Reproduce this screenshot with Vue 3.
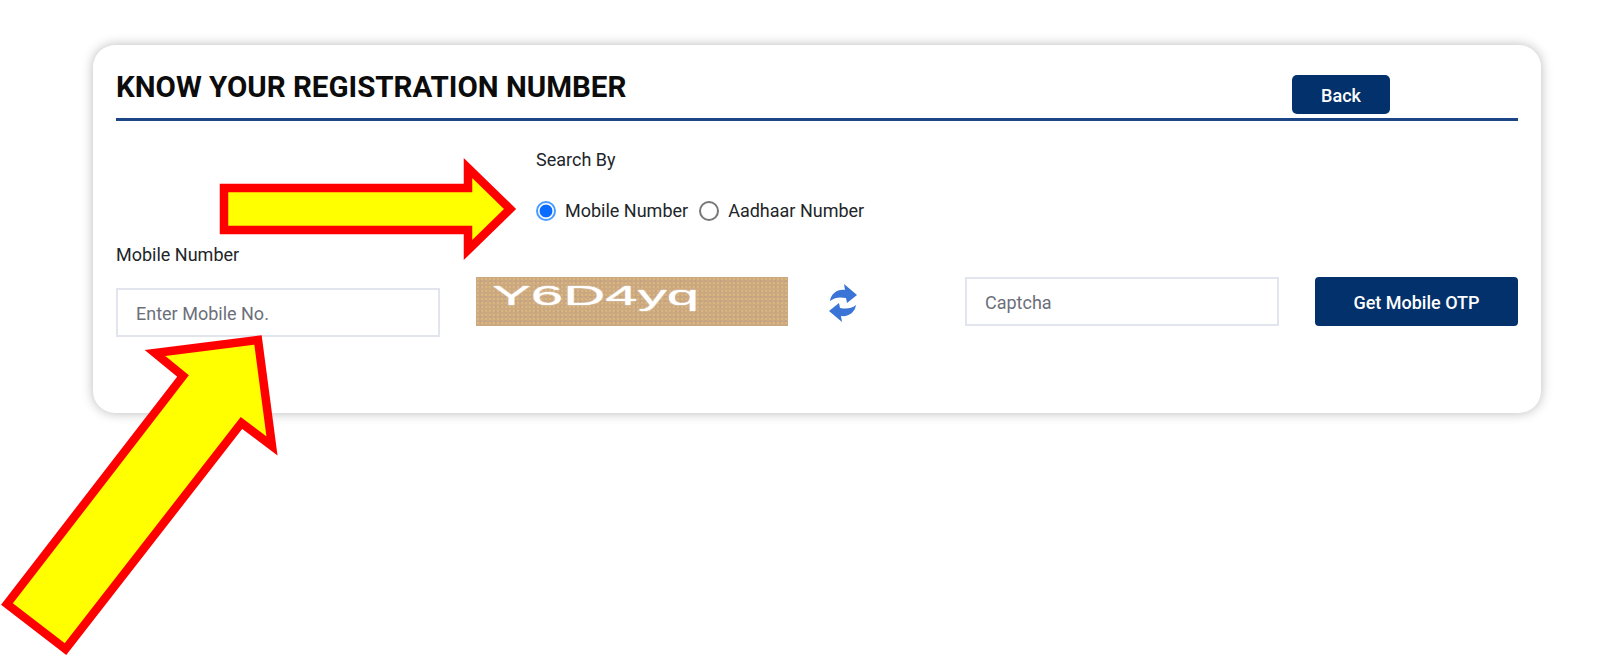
<script setup>
import { ref } from 'vue'

const searchBy = ref('mobile')
</script>

<template>
  <div class="page">
    <div class="card">
      <div class="head">
        <h2 class="title">KNOW YOUR REGISTRATION NUMBER</h2>
        <button class="btn back" type="button">Back</button>
      </div>

      <div class="body">
        <div class="left">
          <label class="label">Mobile Number</label>
          <input class="input" type="text" placeholder="Enter Mobile No." />
        </div>

        <div class="right">
          <div class="search">
            <p class="label search-title">Search By</p>
            <div class="radios">
              <label class="radio">
                <input v-model="searchBy" type="radio" value="mobile" />
                <span>Mobile Number</span>
              </label>
              <label class="radio">
                <input v-model="searchBy" type="radio" value="aadhaar" />
                <span>Aadhaar Number</span>
              </label>
            </div>
          </div>

          <div class="captcha-row">
            <div class="captcha-img"><span class="captcha-text">Y6D4yq</span></div>
            <button class="refresh" type="button" aria-label="Refresh captcha">
              <svg width="28" height="38" viewBox="0 0 28 38">
                <path fill="#3a74d6" d="M1 17 C2 10 8 5 16 6 L15 0 L28 11 L18 19 L17 14 C11 13 6 13 1 17 Z" />
                <path fill="#3a74d6" d="M27 21 C26 28 20 33 12 32 L13 38 L0 27 L10 19 L11 24 C17 25 22 25 27 21 Z" />
              </svg>
            </button>
            <input class="input captcha-input" type="text" placeholder="Captcha" />
            <button class="btn otp" type="button">Get Mobile OTP</button>
          </div>
        </div>
      </div>
    </div>

    <!-- callout arrows painted over the form -->
    <svg class="arrows" width="1600" height="656" viewBox="0 0 1600 656">
      <polygon class="arrow" points="224,188 468,188 468,168 510,209 468,250 468,230 224,230" />
      <polygon class="arrow" points="258,340 155,353 183,376 7,604 65.5,649 241.5,423 272,446" />
    </svg>
  </div>
</template>

<style>
html,
body {
  background: #fff;
}
</style>

<style scoped>
.page {
  position: relative;
  width: 1600px;
  height: 656px;
  padding: 45px 0 0 93px;
  box-sizing: border-box;
  overflow: hidden;
  font-family: Roboto, "Liberation Sans", sans-serif;
  color: #212529;
}

.card {
  width: 1448px;
  height: 368px;
  padding: 0 23px;
  box-sizing: border-box;
  background: #fff;
  border-radius: 22px;
  box-shadow: 0 0 12px rgba(0, 0, 0, 0.28);
}

.head {
  display: flex;
  justify-content: space-between;
  align-items: flex-end;
  height: 76px;
  box-sizing: border-box;
  padding-right: 128px;
  padding-bottom: 4px;
  border-bottom: 3px solid #1b4585;
}

.title {
  margin: 0 0 11px;
  font-size: 29.5px;
  line-height: 32px;
  font-weight: 700;
  color: #0c0c0c;
}

.btn {
  padding: 2px 0 0;
  border: none;
  border-radius: 5px;
  background: #03316b;
  color: #fff;
  font-family: inherit;
  font-size: 18px;
  font-weight: 500;
}

.back {
  width: 98px;
  height: 39px;
}

.body {
  display: flex;
  align-items: flex-end;
}

.left {
  width: 324px;
  margin-right: 36px;
}

.label {
  display: block;
  margin: 0 0 24px;
  font-size: 18px;
  line-height: 19px;
}

.input {
  display: block;
  height: 49px;
  padding: 2px 18px 0;
  box-sizing: border-box;
  border: 2px solid #e2e4ee;
  background: #fff;
  font-family: inherit;
  font-size: 18px;
  outline: none;
}

.left .input {
  width: 324px;
}

.input::placeholder {
  color: #6c6f7a;
}

.right {
  flex: 1;
  padding-bottom: 11px;
}

.search {
  margin-left: 60px;
  padding-top: 29px;
}

.search-title {
  margin-bottom: 32px;
}

.radios {
  display: flex;
  gap: 11px;
  margin-bottom: 56px;
}

.radio {
  display: flex;
  align-items: center;
  gap: 9px;
  font-size: 18px;
  line-height: 20px;
}

.radio input {
  appearance: none;
  width: 20px;
  height: 20px;
  margin: 0;
  border: 2px solid #777;
  border-radius: 50%;
  background: #fff;
}

.radio input:checked {
  border-color: #4a9bff;
  background: radial-gradient(circle, #0a6cff 0 6px, #fff 6.8px);
}

.captcha-row {
  display: flex;
  align-items: flex-start;
}

.captcha-img {
  width: 312px;
  height: 49px;
  overflow: hidden;
  background-color: #cca97f;
  background-image: radial-gradient(circle, #d9b67e 0 1px, transparent 1.2px),
    radial-gradient(circle, #c2a186 0 1px, transparent 1.2px);
  background-size: 4px 4px, 5px 5px;
  background-position: 0 0, 2px 2px;
}

.captcha-text {
  display: inline-block;
  margin: 4px 0 0 16px;
  font-family: "Liberation Sans", sans-serif;
  font-size: 28px;
  line-height: 30px;
  color: #fff;
  white-space: nowrap;
  text-shadow: 0 0 1px #fff;
  transform: scaleX(2.08);
  transform-origin: left top;
}

.refresh {
  width: 28px;
  height: 38px;
  margin: 7px 108px 0 41px;
  padding: 0;
  border: none;
  background: none;
}

.captcha-input {
  width: 314px;
  margin-right: 36px;
}

.otp {
  width: 203px;
  height: 49px;
  border-radius: 4px;
}

.arrows {
  position: absolute;
  top: 0;
  left: 0;
  pointer-events: none;
}

.arrow {
  fill: #ffff00;
  stroke: #ff0000;
  stroke-width: 8.5;
  stroke-miterlimit: 10;
}
</style>
